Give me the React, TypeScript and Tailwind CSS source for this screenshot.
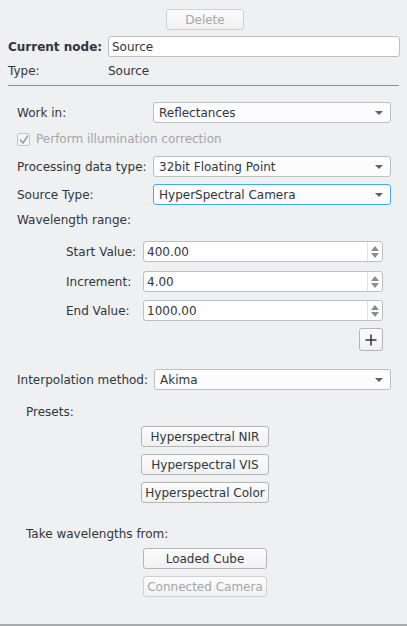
import React from "react";

const font = { fontFamily: '"DejaVu Sans", Verdana, sans-serif' };

function ComboArrow() {
  return (
    <svg width="8" height="4" viewBox="0 0 8 4" className="shrink-0">
      <path d="M0 0 L8 0 L4 4 Z" fill="#5d6266" />
    </svg>
  );
}

function Combo({ value, focused = false, className = "" }: { value: string; focused?: boolean; className?: string }) {
  return (
    <div
      className={`h-[21px] flex items-center justify-between pl-[5px] pr-[7px] rounded-[3px] border bg-[#fcfcfc] ${
        focused ? "border-[#3daee9]" : "border-[#bcbebf]"
      } ${className}`}
    >
      <span className="leading-none">{value}</span>
      <ComboArrow />
    </div>
  );
}

function SpinBox({ value }: { value: string }) {
  return (
    <div className="flex-1 h-[21px] flex items-stretch rounded-[3px] border border-[#bcbebf] bg-white">
      <div className="flex-1 flex items-center pl-[3px] leading-none">{value}</div>
      <div className="w-[15px] border-l border-[#e3e4e5] flex flex-col items-center justify-center gap-[2px]">
        <svg width="8" height="5" viewBox="0 0 8 5">
          <path d="M0 5 L8 5 L4 0 Z" fill="#8a8e92" />
        </svg>
        <svg width="8" height="5" viewBox="0 0 8 5">
          <path d="M0 0 L8 0 L4 5 Z" fill="#8a8e92" />
        </svg>
      </div>
    </div>
  );
}

function PushButton({ label, disabled = false, className = "" }: { label: string; disabled?: boolean; className?: string }) {
  return (
    <button
      type="button"
      className={`h-[21px] flex items-center justify-center rounded-[3px] border leading-none bg-gradient-to-b from-[#fcfcfc] to-[#f1f1f2] ${
        disabled ? "border-[#cfd0d1] text-[#a5a7a9]" : "border-[#b3b5b6] text-[#31363b]"
      } ${className}`}
    >
      {label}
    </button>
  );
}

export default function App() {
  return (
    <div
      className="w-[407px] h-[626px] bg-[#eff0f1] text-[#31363b] text-[12px] border-b-2 border-[#a9abad] flex flex-col overflow-hidden"
      style={font}
    >
      {/* top toolbar */}
      <div className="flex justify-center pl-[3px] mt-[9px]">
        <PushButton label="Delete" disabled className="w-[78px]" />
      </div>

      <div className="flex items-center pl-[8px] pr-[7px] mt-[6px]">
        <span className="w-[100px] font-bold">Current node:</span>
        <div className="flex-1 h-[21px] flex items-center pl-[3px] rounded-[3px] border border-[#bcbebf] bg-white leading-none">
          Source
        </div>
      </div>

      <div className="flex items-center h-[16px] pl-[8px] mt-[6px]">
        <span className="w-[100px]">Type:</span>
        <span>Source</span>
      </div>

      <div className="h-px bg-[#8c8f92] mx-[8px] mt-[6px]" />

      {/* settings */}
      <div className="flex flex-col pl-[17px] pr-[16px]">
        <div className="flex items-center mt-[16px]">
          <span className="w-[136px]">Work in:</span>
          <Combo value="Reflectances" className="flex-1" />
        </div>

        <div className="flex items-center h-[20px] mt-[6px] gap-[6px] text-[#a2a5a8]">
          <div className="w-[13px] h-[13px] border border-[#c3c5c7] rounded-[2px] bg-[#f4f5f5] flex items-center justify-center">
            <svg width="10" height="9" viewBox="0 0 10 9">
              <path d="M1 4.5 L4 8 L9 0.5" fill="none" stroke="#93969a" strokeWidth="1.4" />
            </svg>
          </div>
          <span>Perform illumination correction</span>
        </div>

        <div className="flex items-center mt-[7px]">
          <span className="w-[136px]">Processing data type:</span>
          <Combo value="32bit Floating Point" className="flex-1" />
        </div>

        <div className="flex items-center mt-[7px]">
          <span className="w-[136px]">Source Type:</span>
          <Combo value="HyperSpectral Camera" focused className="flex-1" />
        </div>

        <div className="h-[16px] flex items-center mt-[7px]">Wavelength range:</div>

        <div className="flex flex-col pl-[49px] pr-[8px]">
          <div className="flex items-center mt-[13px]">
            <span className="w-[77px]">Start Value:</span>
            <SpinBox value="400.00" />
          </div>
          <div className="flex items-center mt-[9px]">
            <span className="w-[77px]">Increment:</span>
            <SpinBox value="4.00" />
          </div>
          <div className="flex items-center mt-[8px]">
            <span className="w-[77px]">End Value:</span>
            <SpinBox value="1000.00" />
          </div>
          <div className="flex justify-end mt-[7px]">
            <button
              type="button"
              className="w-[24px] h-[23px] flex items-center justify-center rounded-[3px] border border-[#b3b5b6] bg-gradient-to-b from-[#fcfcfc] to-[#f1f1f2]"
            >
              <svg width="12" height="12" viewBox="0 0 12 12">
                <path d="M6 0.5 V11.5 M0.5 6 H11.5" stroke="#31363b" strokeWidth="1.5" />
              </svg>
            </button>
          </div>
        </div>

        <div className="flex items-center mt-[18px]">
          <span className="w-[137px]">Interpolation method:</span>
          <Combo value="Akima" className="flex-1" />
        </div>

        <div className="h-[16px] flex items-center pl-[9px] mt-[14px]">Presets:</div>
        <div className="flex flex-col gap-[7px] pl-[124px] mt-[6px]">
          <PushButton label="Hyperspectral NIR" className="w-[128px]" />
          <PushButton label="Hyperspectral VIS" className="w-[128px]" />
          <PushButton label="Hyperspectral Color" className="w-[128px]" />
        </div>

        <div className="h-[16px] flex items-center pl-[9px] mt-[23px]">Take wavelengths from:</div>
        <div className="flex flex-col gap-[7px] pl-[126px] mt-[6px]">
          <PushButton label="Loaded Cube" className="w-[124px]" />
          <PushButton label="Connected Camera" disabled className="w-[124px]" />
        </div>
      </div>
    </div>
  );
}
